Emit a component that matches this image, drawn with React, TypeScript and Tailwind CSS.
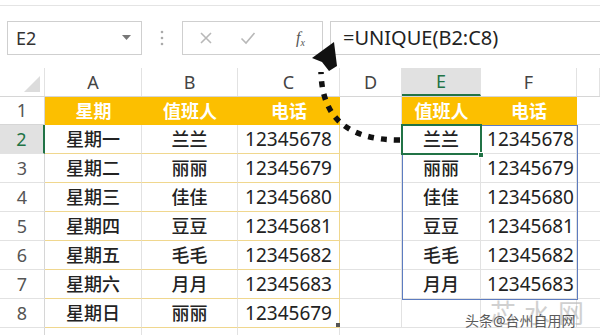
import React from "react";

const colW = ["w-[45px]", "w-[97px]", "w-[96px]", "w-[102px]", "w-[62px]", "w-[79px]", "w-[96px]", "w-[23px]"];

const days = ["星期一", "星期二", "星期三", "星期四", "星期五", "星期六", "星期日"];
const names = ["兰兰", "丽丽", "佳佳", "豆豆", "毛毛", "月月", "丽丽"];
const phones = ["12345678", "12345679", "12345680", "12345681", "12345682", "12345683", "12345679"];
const uNames = ["兰兰", "丽丽", "佳佳", "豆豆", "毛毛", "月月"];
const uPhones = ["12345678", "12345679", "12345680", "12345681", "12345682", "12345683"];

function Toolbar() {
  return (
    <div className="h-[68px]">
      <div className="h-[5px]" />
      <div className="flex items-start border-t border-[#e4e4e4] pt-[15px] pl-[7px]">
        <div className="flex h-[34px] w-[135px] items-center justify-between border border-[#cfcfcf] pl-[8px] pr-[10px]">
          <span className="text-[18px] text-[#333]">E2</span>
          <svg width="9" height="6" viewBox="0 0 9 6">
            <path d="M0 0 L9 0 L4.5 5 Z" fill="#777" />
          </svg>
        </div>
        <div className="flex h-[34px] w-[40px] items-center justify-center">
          <svg width="4" height="16" viewBox="0 0 4 16">
            <circle cx="2" cy="2" r="1.3" fill="#aaa" />
            <circle cx="2" cy="8" r="1.3" fill="#aaa" />
            <circle cx="2" cy="14" r="1.3" fill="#aaa" />
          </svg>
        </div>
        <div className="flex h-[34px] w-[141px] items-center border border-[#cfcfcf]">
          <div className="flex w-[46px] justify-center">
            <svg width="14" height="14" viewBox="0 0 14 14">
              <path d="M2 2 L12 12 M12 2 L2 12" stroke="#b8b8b8" strokeWidth="1.6" />
            </svg>
          </div>
          <div className="flex w-[38px] justify-center">
            <svg width="16" height="14" viewBox="0 0 16 14">
              <path d="M1.5 7.5 L6 12 L14.5 2" stroke="#b8b8b8" strokeWidth="1.6" fill="none" />
            </svg>
          </div>
          <div className="flex flex-1 justify-center pl-[12px]">
            <span className="text-[16px] italic text-[#555] font-['Liberation_Serif',serif]">
              f<sub className="text-[10px]">x</sub>
            </span>
          </div>
        </div>
        <div className="ml-[7px] flex h-[34px] flex-1 items-center border-y border-l border-[#cfcfcf] pl-[12px]">
          <span className="text-[20px] text-[#222]">=UNIQUE(B2:C8)</span>
        </div>
      </div>
    </div>
  );
}

function HeaderRow() {
  const letters = ["", "A", "B", "C", "D", "E", "F", ""];
  return (
    <div className="flex h-[29px] border-b border-[#d6d6d6]">
      {letters.map((l, i) => (
        <div
          key={i}
          className={`${colW[i]} flex items-center justify-center border-r border-[#e2e2e2] text-[18px] text-[#444] ${
            i === 5 ? "bg-[#e1e1e1] border-b-2 border-b-[#217346] text-[#217346]" : ""
          }`}
        >
          {i === 0 ? (
            <div className="flex h-full w-full items-end justify-end pb-[4px] pr-[4px]">
              <svg width="16" height="16" viewBox="0 0 16 16">
                <path d="M16 0 L16 16 L0 16 Z" fill="#dcdcdc" />
              </svg>
            </div>
          ) : (
            l
          )}
        </div>
      ))}
    </div>
  );
}

function YellowRow() {
  const vals = ["星期", "值班人", "电话", "", "值班人", "电话"];
  return (
    <div className="flex h-[28px]">
      <div className={`${colW[0]} flex items-center justify-center border-r border-b border-[#d6d6d6] text-[18px] text-[#555]`}>1</div>
      {vals.map((v, i) => (
        <div
          key={i}
          className={`${colW[i + 1]} flex items-center justify-center text-[18px] font-bold text-white ${
            v ? "bg-[#fcbf00]" : "border-r border-b border-[#e2e2e2]"
          }`}
        >
          {v}
        </div>
      ))}
      <div className={`${colW[7]} border-b border-[#e2e2e2]`} />
    </div>
  );
}

function DataRow({ r }: { r: number }) {
  const k = r - 2;
  const sel = r === 2;
  return (
    <div className="flex h-[29px]">
      <div
        className={`${colW[0]} flex items-center justify-center border-b border-[#e2e2e2] text-[18px] ${
          sel ? "bg-[#e1e1e1] border-r-2 border-r-[#217346] text-[#217346]" : "border-r border-r-[#d6d6d6] text-[#555]"
        }`}
      >
        {r}
      </div>
      <div className={`${colW[1]} flex items-center justify-center border-r border-b border-r-[#e2e2e2] border-b-[#f0d78e] text-[18px] font-medium text-[#222]`}>
        {days[k]}
      </div>
      <div className={`${colW[2]} flex items-center justify-center border-r border-b border-r-[#e2e2e2] border-b-[#f0d78e] text-[18px] font-medium text-[#222]`}>
        {names[k]}
      </div>
      <div className={`${colW[3]} flex items-center justify-end border-r border-b border-r-[#f0d78e] border-b-[#f0d78e] pr-[7px] text-[19px] text-[#222]`}>
        {phones[k]}
      </div>
      <div className={`${colW[4]} border-r border-b border-[#e2e2e2]`} />
      <div className={`${colW[5]} flex items-center justify-center border-r border-b border-[#e2e2e2] text-[18px] font-medium text-[#222]`}>
        {uNames[k] ?? ""}
      </div>
      <div className={`${colW[6]} flex items-center justify-end border-r border-b border-[#e2e2e2] pr-[2px] text-[19px] text-[#222]`}>
        {uPhones[k] ?? ""}
      </div>
      <div className={`${colW[7]} border-b border-[#e2e2e2]`} />
    </div>
  );
}

export default function App() {
  return (
    <div className="relative h-[335px] w-[600px] overflow-hidden bg-white font-['Noto_Sans','Noto_Sans_CJK_SC',sans-serif]">
      <Toolbar />
      <HeaderRow />
      <YellowRow />
      {[2, 3, 4, 5, 6, 7, 8].map((r) => (
        <DataRow key={r} r={r} />
      ))}
      <div className="flex h-[10px]">
        <div className={`${colW[0]} border-r border-[#d6d6d6]`} />
        <div className={`${colW[1]} border-r border-[#e2e2e2]`} />
        <div className={`${colW[2]} border-r border-[#e2e2e2]`} />
        <div className={`${colW[3]} border-r border-[#e2e2e2]`} />
      </div>

      {/* unique result range outline */}
      <div className="absolute left-[402px] top-[125px] h-[175px] w-[176px] border border-[#5d7cc0]" />
      {/* active cell */}
      <div className="absolute left-[401px] top-[124px] h-[31px] w-[81px] border-2 border-[#217346]" />
      <div className="absolute left-[478px] top-[152px] h-[6px] w-[6px] border border-white bg-[#217346]" />
      {/* fill handle on A1:C8 */}
      <div className="absolute left-[336px] top-[323px] h-[4px] w-[4px] bg-[#555]" />

      {/* dotted arrow */}
      <svg className="absolute left-0 top-0" width="600" height="335" viewBox="0 0 600 335">
        <path
          d="M400 140 C 350 140, 322 120, 321 72"
          fill="none"
          stroke="#111"
          strokeWidth="5.5"
          strokeDasharray="6 7"
        />
        <polygon points="334,42 312,58 322,62 329,71 337,66" fill="#111" />
      </svg>

      {/* watermark */}
      <div className="absolute left-[490px] top-[294px] text-[26px] tracking-[8px] text-[#bdbdbd] opacity-70">芯水网</div>
      <div className="absolute left-[465px] top-[310px] text-[14px] text-[#333] opacity-80">头条@台州自用网</div>
    </div>
  );
}
